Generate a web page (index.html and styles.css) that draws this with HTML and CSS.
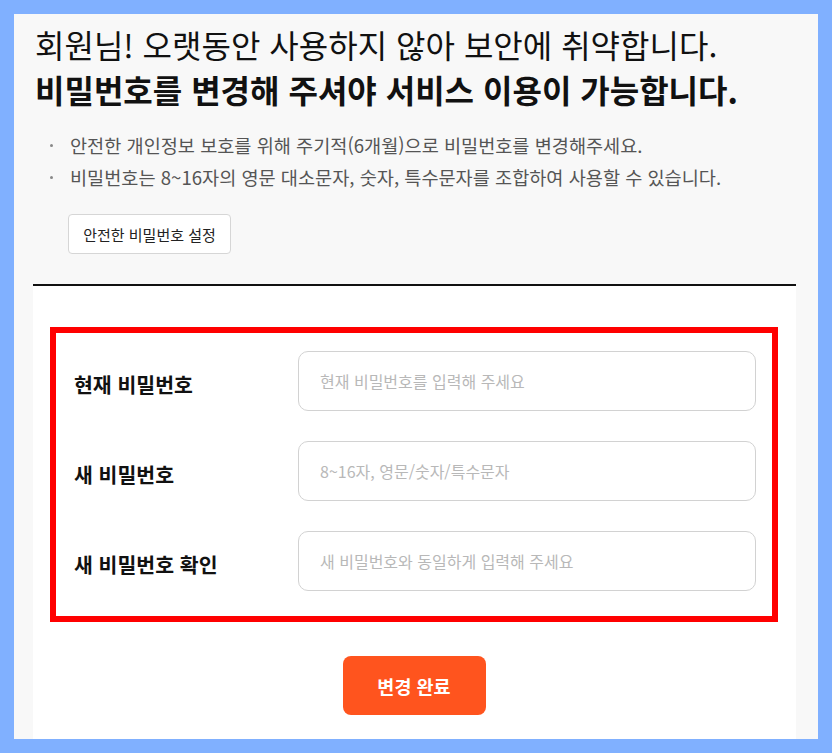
FILE: index.html
```html
<!DOCTYPE html>
<html lang="ko">
<head>
<meta charset="utf-8">
<link rel="stylesheet" href="styles.css">
</head>
<body>
<div class="page">
  <h1 class="title">
    <span class="title-line">회원님! 오랫동안 사용하지 않아 보안에 취약합니다.</span>
    <strong class="title-line bold">비밀번호를 변경해 주셔야 서비스 이용이 가능합니다.</strong>
  </h1>
  <ul class="notes">
    <li>안전한 개인정보 보호를 위해 주기적(6개월)으로 비밀번호를 변경해주세요.</li>
    <li>비밀번호는 8~16자의 영문 대소문자, 숫자, 특수문자를 조합하여 사용할 수 있습니다.</li>
  </ul>
  <div class="guide-row"><button class="guide-btn" type="button">안전한 비밀번호 설정</button></div>
  <div class="panel">
    <div class="form-box">
      <div class="row">
        <label class="label">현재 비밀번호</label>
        <input class="field" type="password" placeholder="현재 비밀번호를 입력해 주세요">
      </div>
      <div class="row">
        <label class="label">새 비밀번호</label>
        <input class="field" type="password" placeholder="8~16자, 영문/숫자/특수문자">
      </div>
      <div class="row">
        <label class="label">새 비밀번호 확인</label>
        <input class="field" type="password" placeholder="새 비밀번호와 동일하게 입력해 주세요">
      </div>
    </div>
    <div class="submit-row"><button class="submit-btn" type="button">변경 완료</button></div>
  </div>
</div>
</body>
</html>
```

FILE: styles.css
```css
* { box-sizing: border-box; }
html, body { margin: 0; height: 100%; }
body {
  background: #80b0ff;
  padding: 14px;
  font-family: "Noto Sans CJK KR", "Noto Sans", sans-serif;
  color: #111;
  overflow: hidden;
}
.page {
  background: #f8f8f8;
  height: 725px;
  padding: 8px 22px 0 19px;
  display: flex;
  flex-direction: column;
}
.title {
  margin: 0 0 0 2px;
  font-size: 32px;
  line-height: 45px;
  font-weight: 400;
  color: #111;
}
.title-line { display: block; }
.bold { font-weight: 700; }
.notes {
  margin: 17px 0 0 0;
  padding: 0;
  list-style: none;
  font-size: 18.6px;
  line-height: 32px;
  color: #555;
}
.notes li { position: relative; padding-left: 37px; }
.notes li::before {
  content: "";
  position: absolute;
  left: 17px;
  top: 15px;
  width: 3px;
  height: 3px;
  border-radius: 50%;
  background: #888;
}
.guide-row { margin: 21px 0 0 35px; }
.guide-btn {
  font-family: inherit;
  width: 163px;
  height: 40px;
  background: #fff;
  border: 1px solid #d6d6d6;
  border-radius: 4px;
  font-size: 15px;
  color: #222;
  padding: 0;
}
.panel {
  margin-top: 30px;
  flex: 1;
  background: #fff;
  border-top: 2px solid #111;
  padding: 41px 18px 0 17px;
}
.form-box {
  border: 6px solid #ff0000;
  padding: 18px 16px 25px 18px;
  display: flex;
  flex-direction: column;
  gap: 30px;
}
.row {
  display: flex;
  align-items: center;
}
.label {
  width: 224px;
  flex: none;
  padding-top: 5px;
  font-size: 20.5px;
  font-weight: 700;
  color: #111;
}
.field {
  flex: 1;
  height: 60px;
  border: 1px solid #d2d2d2;
  border-radius: 10px;
  padding: 0 21px;
  font-family: inherit;
  font-size: 16px;
  background: #fff;
}
.field::placeholder { color: #b8b8b8; }
.submit-row {
  display: flex;
  justify-content: center;
  margin-top: 34px;
}
.submit-btn {
  width: 143px;
  height: 59px;
  border: none;
  border-radius: 8px;
  background: #ff541e;
  color: #fff;
  font-family: inherit;
  font-size: 18.5px;
  font-weight: 700;
}
```
